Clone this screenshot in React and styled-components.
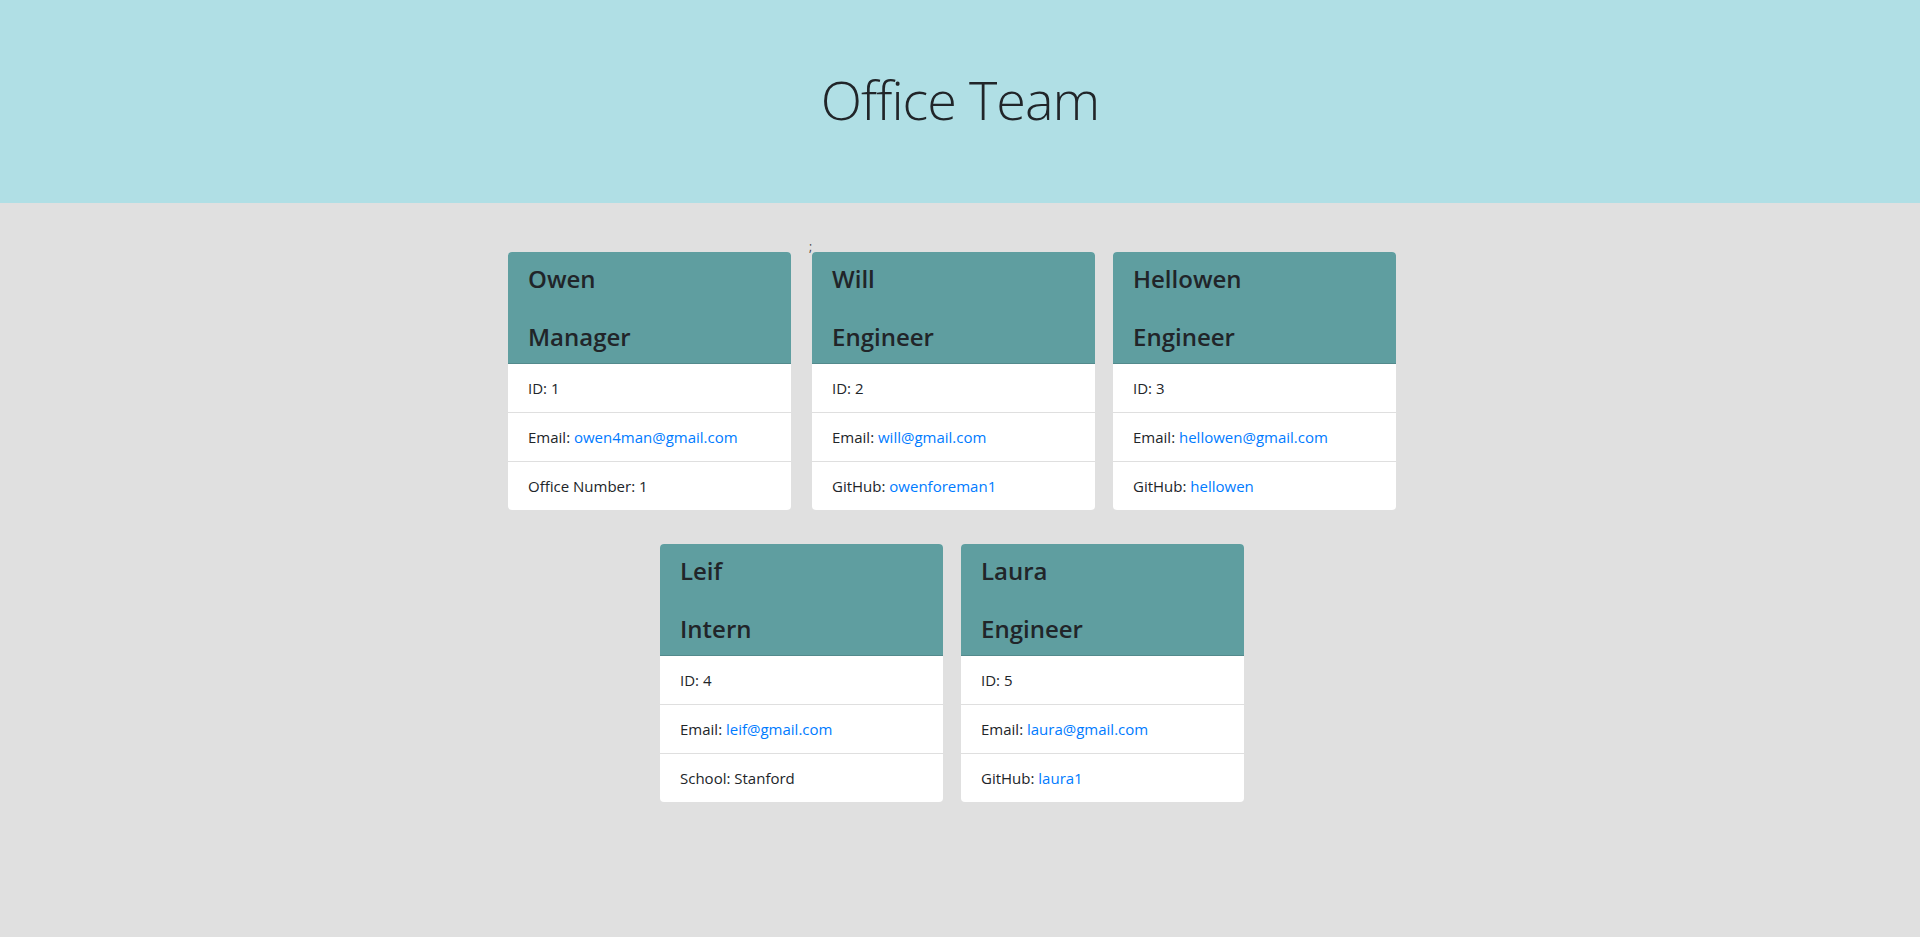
import React from 'react';
import styled, { createGlobalStyle } from 'styled-components';

const GlobalStyle = createGlobalStyle`
  * { box-sizing: border-box; }
  html, body {
    margin: 0;
    padding: 0;
    background: #e0e0e0;
    font-family: "Open Sans", "Noto Sans", sans-serif;
    font-size: 16px;
    line-height: 1.5;
    color: #212529;
  }
`;

const Jumbotron = styled.header`
  background: #b0dfe5;
  height: 203px;
  display: flex;
  align-items: center;
  justify-content: center;
  padding-bottom: 5px;
  margin-bottom: 32px;
`;

const Title = styled.h1`
  margin: 0;
  font-size: 54px;
  font-weight: 300;
  line-height: 1.2;
  color: #212529;
  letter-spacing: -1px;
`;

const CardRow = styled.main`
  display: flex;
  flex-wrap: wrap;
  justify-content: center;
  max-width: 1110px;
  margin: 0 auto;
  padding-right: 16px;
`;

const Stray = styled.span`
  width: 3px;
  margin: 0 -9px 0 9px;
  font-size: 12px;
  line-height: 24px;
  color: #444;
  overflow: visible;
`;

const Card = styled.section`
  width: 283px;
  margin: 17px 9px;
  background: #fff;
  border-radius: 4px;
  overflow: hidden;
`;

const CardHeader = styled.div`
  background: #5f9ea0;
  padding: 12px 20px;
  border-bottom: 1px solid rgba(0, 0, 0, 0.125);
`;

const HeadLine = styled.h4`
  margin: 0 0 ${(p) => (p.$first ? '29px' : '0')};
  font-size: 24px;
  font-weight: 600;
  line-height: 29px;
  color: #212529;
`;

const List = styled.ul`
  list-style: none;
  margin: 0;
  padding: 0;
`;

const Item = styled.li`
  padding: 12px 20px;
  line-height: 24px;
  font-size: 15px;
  border-bottom: 1px solid rgba(0, 0, 0, 0.125);

  &:last-child {
    border-bottom: none;
  }
`;

const Link = styled.a`
  color: #007bff;
  text-decoration: none;
`;

const team = [
  { name: 'Owen', role: 'Manager', id: 1, email: 'owen4man@gmail.com', extra: ['Office Number', '1'] },
  { name: 'Will', role: 'Engineer', id: 2, email: 'will@gmail.com', extra: ['GitHub', 'owenforeman1', true] },
  { name: 'Hellowen', role: 'Engineer', id: 3, email: 'hellowen@gmail.com', extra: ['GitHub', 'hellowen', true] },
  { name: 'Leif', role: 'Intern', id: 4, email: 'leif@gmail.com', extra: ['School', 'Stanford'] },
  { name: 'Laura', role: 'Engineer', id: 5, email: 'laura@gmail.com', extra: ['GitHub', 'laura1', true] },
];

const EmployeeCard = ({ person }) => {
  const [label, value, isLink] = person.extra;
  return (
    <Card>
      <CardHeader>
        <HeadLine $first>{person.name}</HeadLine>
        <HeadLine>{person.role}</HeadLine>
      </CardHeader>
      <List>
        <Item>ID: {person.id}</Item>
        <Item>
          Email: <Link href={`mailto:${person.email}`}>{person.email}</Link>
        </Item>
        <Item>
          {label}: {isLink ? <Link href={`https://github.com/${value}`}>{value}</Link> : value}
        </Item>
      </List>
    </Card>
  );
};

const App = () => (
  <>
    <GlobalStyle />
    <Jumbotron>
      <Title>Office Team</Title>
    </Jumbotron>
    <CardRow>
      <EmployeeCard person={team[0]} />
      <Stray>;</Stray>
      {team.slice(1).map((p) => (
        <EmployeeCard key={p.id} person={p} />
      ))}
    </CardRow>
  </>
);

export default App;
